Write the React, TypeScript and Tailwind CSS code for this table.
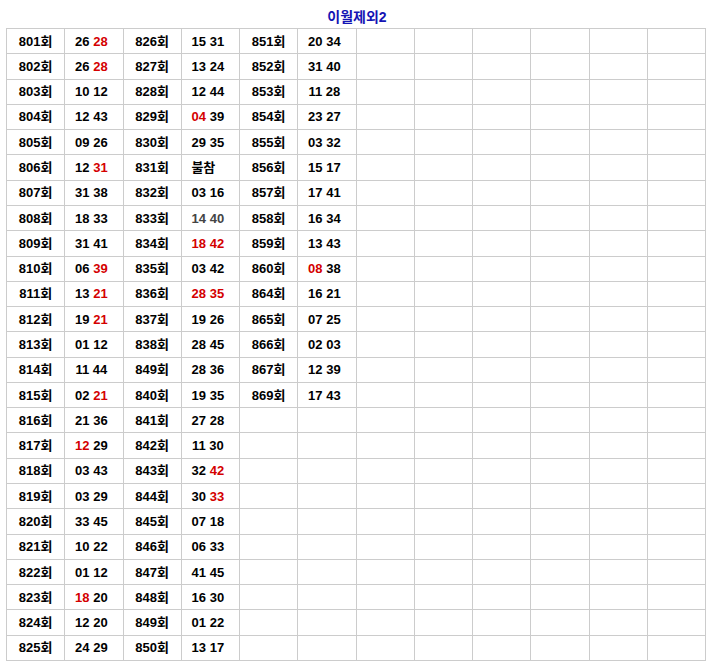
type Num = { v: string; red?: boolean };
type Cell = { round: string; nums?: Num[]; text?: string; gray?: boolean } | null;

const n = (s: string, red = false): Num => ({ v: s, red });

const colA: Cell[] = [
  { round: "801회", nums: [n("26"), n("28", true)] },
  { round: "802회", nums: [n("26"), n("28", true)] },
  { round: "803회", nums: [n("10"), n("12")] },
  { round: "804회", nums: [n("12"), n("43")] },
  { round: "805회", nums: [n("09"), n("26")] },
  { round: "806회", nums: [n("12"), n("31", true)] },
  { round: "807회", nums: [n("31"), n("38")] },
  { round: "808회", nums: [n("18"), n("33")] },
  { round: "809회", nums: [n("31"), n("41")] },
  { round: "810회", nums: [n("06"), n("39", true)] },
  { round: "811회", nums: [n("13"), n("21", true)] },
  { round: "812회", nums: [n("19"), n("21", true)] },
  { round: "813회", nums: [n("01"), n("12")] },
  { round: "814회", nums: [n("11"), n("44")] },
  { round: "815회", nums: [n("02"), n("21", true)] },
  { round: "816회", nums: [n("21"), n("36")] },
  { round: "817회", nums: [n("12", true), n("29")] },
  { round: "818회", nums: [n("03"), n("43")] },
  { round: "819회", nums: [n("03"), n("29")] },
  { round: "820회", nums: [n("33"), n("45")] },
  { round: "821회", nums: [n("10"), n("22")] },
  { round: "822회", nums: [n("01"), n("12")] },
  { round: "823회", nums: [n("18", true), n("20")] },
  { round: "824회", nums: [n("12"), n("20")] },
  { round: "825회", nums: [n("24"), n("29")] },
];

const colB: Cell[] = [
  { round: "826회", nums: [n("15"), n("31")] },
  { round: "827회", nums: [n("13"), n("24")] },
  { round: "828회", nums: [n("12"), n("44")] },
  { round: "829회", nums: [n("04", true), n("39")] },
  { round: "830회", nums: [n("29"), n("35")] },
  { round: "831회", text: "불참" },
  { round: "832회", nums: [n("03"), n("16")] },
  { round: "833회", nums: [n("14"), n("40")], gray: true },
  { round: "834회", nums: [n("18", true), n("42", true)] },
  { round: "835회", nums: [n("03"), n("42")] },
  { round: "836회", nums: [n("28", true), n("35", true)] },
  { round: "837회", nums: [n("19"), n("26")] },
  { round: "838회", nums: [n("28"), n("45")] },
  { round: "849회", nums: [n("28"), n("36")] },
  { round: "840회", nums: [n("19"), n("35")] },
  { round: "841회", nums: [n("27"), n("28")] },
  { round: "842회", nums: [n("11"), n("30")] },
  { round: "843회", nums: [n("32"), n("42", true)] },
  { round: "844회", nums: [n("30"), n("33", true)] },
  { round: "845회", nums: [n("07"), n("18")] },
  { round: "846회", nums: [n("06"), n("33")] },
  { round: "847회", nums: [n("41"), n("45")] },
  { round: "848회", nums: [n("16"), n("30")] },
  { round: "849회", nums: [n("01"), n("22")] },
  { round: "850회", nums: [n("13"), n("17")] },
];

const colC: Cell[] = [
  { round: "851회", nums: [n("20"), n("34")] },
  { round: "852회", nums: [n("31"), n("40")] },
  { round: "853회", nums: [n("11"), n("28")] },
  { round: "854회", nums: [n("23"), n("27")] },
  { round: "855회", nums: [n("03"), n("32")] },
  { round: "856회", nums: [n("15"), n("17")] },
  { round: "857회", nums: [n("17"), n("41")] },
  { round: "858회", nums: [n("16"), n("34")] },
  { round: "859회", nums: [n("13"), n("43")] },
  { round: "860회", nums: [n("08", true), n("38")] },
  { round: "864회", nums: [n("16"), n("21")] },
  { round: "865회", nums: [n("07"), n("25")] },
  { round: "866회", nums: [n("02"), n("03")] },
  { round: "867회", nums: [n("12"), n("39")] },
  { round: "869회", nums: [n("17"), n("43")] },
];

const groups = [colA, colB, colC];

const cellCls =
  "border-r border-b border-[#cccccc] flex items-center justify-center whitespace-pre";

const Pair = ({ c }: { c: Cell }) => {
  if (!c) {
    return (
      <>
        <div className={cellCls} />
        <div className={cellCls} />
      </>
    );
  }
  return (
    <>
      <div className={cellCls}>{c.round}</div>
      <div className={`${cellCls} ${c.text ? "pr-[14px]" : "pr-[5px]"}`}>
        {c.text
          ? c.text
          : c.nums!.map((x, i) => (
              <span key={i} className={x.red ? "text-[#d40000]" : c.gray ? "text-[#444444]" : ""}>
                {i > 0 ? " " : ""}
                {x.v}
              </span>
            ))}
      </div>
    </>
  );
};

export default function App() {
  const rows = Array.from({ length: 25 }, (_, r) => r);
  return (
    <div className="w-[714px] h-[666px] bg-white font-['Liberation_Sans','Noto_Sans_CJK_KR',sans-serif] text-black">
      <div className="h-[28px] pt-[6px] flex justify-center">
        <span className="text-[14px] leading-[22px] font-bold text-[#1414b4]">이월제외2</span>
      </div>
      <div className="ml-[6px] w-[700px] h-[633px] grid grid-cols-12 grid-rows-[repeat(25,minmax(0,1fr))] border-l border-t border-[#cccccc] text-[13px] font-bold leading-none">
        {rows.map((r) => (
          <div key={r} className="contents">
            {groups.map((g, gi) => (
              <Pair key={gi} c={g[r] ?? null} />
            ))}
            {Array.from({ length: 6 }, (_, k) => (
              <div key={k} className={cellCls} />
            ))}
          </div>
        ))}
      </div>
    </div>
  );
}
